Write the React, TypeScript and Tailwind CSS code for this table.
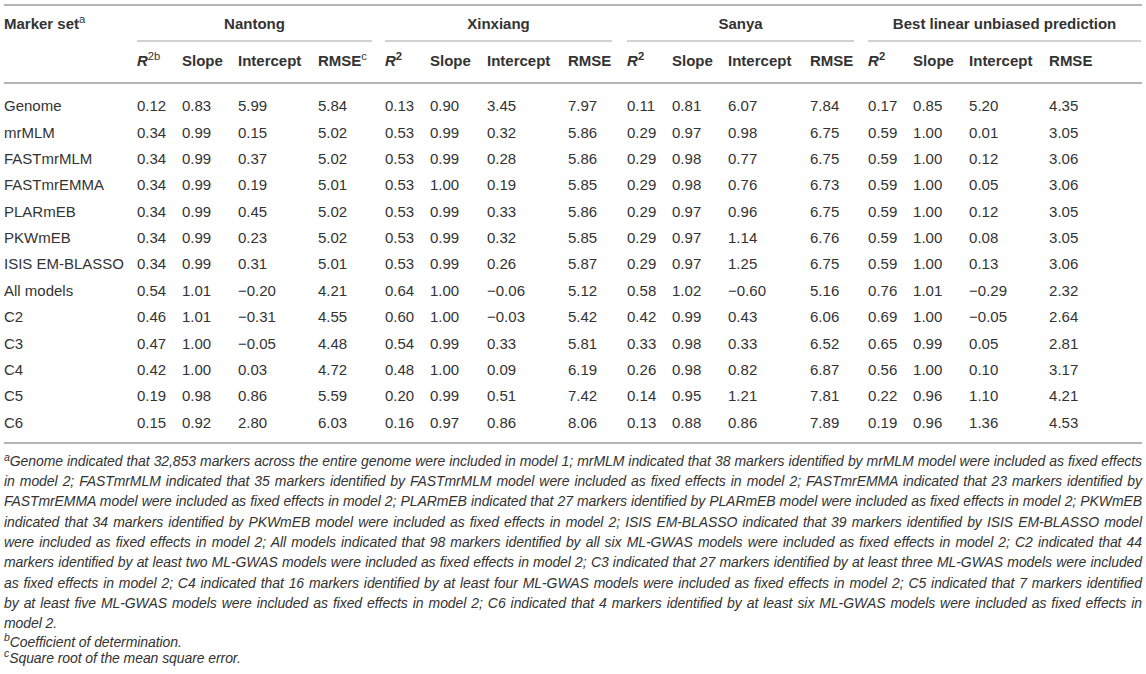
const colWidths = [
  "w-[133px]",
  "w-[45px]", "w-[56px]", "w-[80px]", "w-[67px]",
  "w-[45px]", "w-[57px]", "w-[81px]", "w-[59px]",
  "w-[45px]", "w-[56px]", "w-[82px]", "w-[58px]",
  "w-[45px]", "w-[56px]", "w-[80px]", "w-[93px]",
];

const groups = [
  { name: "Nantong", gap: "mr-[13px]" },
  { name: "Xinxiang", gap: "mr-[15px]" },
  { name: "Sanya", gap: "mr-[14px]" },
  { name: "Best linear unbiased prediction", gap: "mr-[1px]" },
];

const rows: [string, string[]][] = [
  ["Genome", ["0.12", "0.83", "5.99", "5.84", "0.13", "0.90", "3.45", "7.97", "0.11", "0.81", "6.07", "7.84", "0.17", "0.85", "5.20", "4.35"]],
  ["mrMLM", ["0.34", "0.99", "0.15", "5.02", "0.53", "0.99", "0.32", "5.86", "0.29", "0.97", "0.98", "6.75", "0.59", "1.00", "0.01", "3.05"]],
  ["FASTmrMLM", ["0.34", "0.99", "0.37", "5.02", "0.53", "0.99", "0.28", "5.86", "0.29", "0.98", "0.77", "6.75", "0.59", "1.00", "0.12", "3.06"]],
  ["FASTmrEMMA", ["0.34", "0.99", "0.19", "5.01", "0.53", "1.00", "0.19", "5.85", "0.29", "0.98", "0.76", "6.73", "0.59", "1.00", "0.05", "3.06"]],
  ["PLARmEB", ["0.34", "0.99", "0.45", "5.02", "0.53", "0.99", "0.33", "5.86", "0.29", "0.97", "0.96", "6.75", "0.59", "1.00", "0.12", "3.05"]],
  ["PKWmEB", ["0.34", "0.99", "0.23", "5.02", "0.53", "0.99", "0.32", "5.85", "0.29", "0.97", "1.14", "6.76", "0.59", "1.00", "0.08", "3.05"]],
  ["ISIS EM-BLASSO", ["0.34", "0.99", "0.31", "5.01", "0.53", "0.99", "0.26", "5.87", "0.29", "0.97", "1.25", "6.75", "0.59", "1.00", "0.13", "3.06"]],
  ["All models", ["0.54", "1.01", "−0.20", "4.21", "0.64", "1.00", "−0.06", "5.12", "0.58", "1.02", "−0.60", "5.16", "0.76", "1.01", "−0.29", "2.32"]],
  ["C2", ["0.46", "1.01", "−0.31", "4.55", "0.60", "1.00", "−0.03", "5.42", "0.42", "0.99", "0.43", "6.06", "0.69", "1.00", "−0.05", "2.64"]],
  ["C3", ["0.47", "1.00", "−0.05", "4.48", "0.54", "0.99", "0.33", "5.81", "0.33", "0.98", "0.33", "6.52", "0.65", "0.99", "0.05", "2.81"]],
  ["C4", ["0.42", "1.00", "0.03", "4.72", "0.48", "1.00", "0.09", "6.19", "0.26", "0.98", "0.82", "6.87", "0.56", "1.00", "0.10", "3.17"]],
  ["C5", ["0.19", "0.98", "0.86", "5.59", "0.20", "0.99", "0.51", "7.42", "0.14", "0.95", "1.21", "7.81", "0.22", "0.96", "1.10", "4.21"]],
  ["C6", ["0.15", "0.92", "2.80", "6.03", "0.16", "0.97", "0.86", "8.06", "0.13", "0.88", "0.86", "7.89", "0.19", "0.96", "1.36", "4.53"]],
];

// footnote a, broken exactly where the source breaks it
const noteLines = [
  "Genome indicated that 32,853 markers across the entire genome were included in model 1; mrMLM indicated that 38 markers identified by mrMLM model were included as fixed effects",
  "in model 2; FASTmrMLM indicated that 35 markers identified by FASTmrMLM model were included as fixed effects in model 2; FASTmrEMMA indicated that 23 markers identified by",
  "FASTmrEMMA model were included as fixed effects in model 2; PLARmEB indicated that 27 markers identified by PLARmEB model were included as fixed effects in model 2; PKWmEB",
  "indicated that 34 markers identified by PKWmEB model were included as fixed effects in model 2; ISIS EM-BLASSO indicated that 39 markers identified by ISIS EM-BLASSO model",
  "were included as fixed effects in model 2; All models indicated that 98 markers identified by all six ML-GWAS models were included as fixed effects in model 2; C2 indicated that 44",
  "markers identified by at least two ML-GWAS models were included as fixed effects in model 2; C3 indicated that 27 markers identified by at least three ML-GWAS models were included",
  "as fixed effects in model 2; C4 indicated that 16 markers identified by at least four ML-GWAS models were included as fixed effects in model 2; C5 indicated that 7 markers identified",
  "by at least five ML-GWAS models were included as fixed effects in model 2; C6 indicated that 4 markers identified by at least six ML-GWAS models were included as fixed effects in",
  "model 2.",
];

function SubHead({ first }: { first?: boolean }) {
  return (
    <>
      <th className="pt-[9px] pb-[12px] text-left font-bold">
        <span className="italic">R</span>
        {first ? <sup className="font-normal">2b</sup> : <sup className="font-bold">2</sup>}
      </th>
      <th className="pt-[9px] pb-[12px] text-left font-bold">Slope</th>
      <th className="pt-[9px] pb-[12px] text-left font-bold">Intercept</th>
      <th className="pt-[9px] pb-[12px] text-left font-bold">
        RMSE{first && <sup className="font-normal">c</sup>}
      </th>
    </>
  );
}

export default function App() {
  return (
    <div className="min-h-screen bg-white px-[4px] pt-[4px] font-['Liberation_Sans',Arial,sans-serif] text-[#333]">
      <table className="w-[1138px] table-fixed border-collapse text-[15px] leading-[18px]">
        <colgroup>
          {colWidths.map((w, i) => (
            <col key={i} className={w} />
          ))}
        </colgroup>
        <thead>
          <tr className="border-t-2 border-[#b5b5b5]">
            <th className="pt-[9px] pb-[10px] text-left align-top font-bold">
              Marker set<sup className="font-normal">a</sup>
            </th>
            {groups.map((g) => (
              <th key={g.name} colSpan={4} className="pt-[9px] align-top font-bold">
                <div className={`${g.gap} border-b-2 border-[#d2d2d2] pb-[7px] text-center`}>{g.name}</div>
              </th>
            ))}
          </tr>
          <tr className="border-b-2 border-[#b5b5b5]">
            <th />
            <SubHead first />
            <SubHead />
            <SubHead />
            <SubHead />
          </tr>
        </thead>
        <tbody>
          {rows.map(([label, vals], r) => {
            const pad =
              r === 0 ? "pt-[13.2px] pb-[4.2px]" : r === rows.length - 1 ? "pt-[4.2px] pb-[10.2px]" : "py-[4.2px]";
            return (
              <tr key={label} className={r === rows.length - 1 ? "border-b-2 border-[#b5b5b5]" : ""}>
                <td className={`${pad} whitespace-nowrap`}>{label}</td>
                {vals.map((v, i) => (
                  <td key={i} className={`${pad} whitespace-nowrap`}>
                    {v}
                  </td>
                ))}
              </tr>
            );
          })}
        </tbody>
      </table>

      {/* Footnotes */}
      <div className="mt-[7px] w-[1138px] text-[14px] italic tracking-[-0.08px]">
        <div className="leading-[20.3px]">
          {noteLines.map((line, i) => (
            <div
              key={i}
              className={i < noteLines.length - 1 ? "text-justify [text-align-last:justify]" : "text-left"}
            >
              {i === 0 && <sup>a</sup>}
              {line}
            </div>
          ))}
        </div>
        <div className="leading-[16px]">
          <sup>b</sup>Coefficient of determination.
        </div>
        <div className="leading-[17px]">
          <sup>c</sup>Square root of the mean square error.
        </div>
      </div>
    </div>
  );
}
